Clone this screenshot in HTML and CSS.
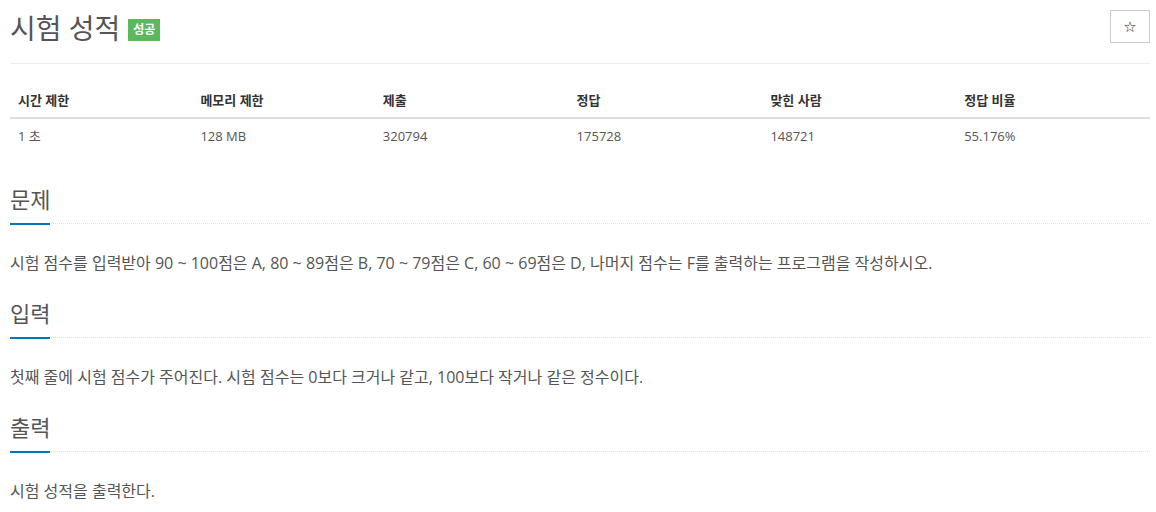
FILE: index.html
```html
<!DOCTYPE html>
<html lang="ko">
<head>
<meta charset="utf-8">
<title>시험 성적</title>
<link rel="stylesheet" href="styles.css">
</head>
<body>
<div class="container">
  <div class="page-header">
    <h1 class="title"><span class="title-text">시험 성적</span><span class="label-success">성공</span></h1>
    <button class="star-btn" type="button">☆</button>
  </div>

  <table class="info-table">
    <thead>
      <tr>
        <th class="c16">시간 제한</th>
        <th class="c16">메모리 제한</th>
        <th class="c17">제출</th>
        <th class="c17">정답</th>
        <th class="c17">맞힌 사람</th>
        <th class="c17">정답 비율</th>
      </tr>
    </thead>
    <tbody>
      <tr>
        <td>1 초</td>
        <td>128 MB</td>
        <td>320794</td>
        <td>175728</td>
        <td>148721</td>
        <td>55.176%</td>
      </tr>
    </tbody>
  </table>

  <section class="problem-section">
    <div class="headline"><h2>문제</h2></div>
    <p class="problem-text">시험 점수를 입력받아 90 ~ 100점은 A, 80 ~ 89점은 B, 70 ~ 79점은 C, 60 ~ 69점은 D, 나머지 점수는 F를 출력하는 프로그램을 작성하시오.</p>
  </section>

  <section class="problem-section">
    <div class="headline"><h2>입력</h2></div>
    <p class="problem-text">첫째 줄에 시험 점수가 주어진다. 시험 점수는 0보다 크거나 같고, 100보다 작거나 같은 정수이다.</p>
  </section>

  <section class="problem-section">
    <div class="headline"><h2>출력</h2></div>
    <p class="problem-text">시험 성적을 출력한다.</p>
  </section>
</div>
</body>
</html>
```

FILE: styles.css
```css
html, body {
  margin: 0;
  padding: 0;
  background: #fff;
}

body {
  font-family: "Open Sans", "Noto Sans CJK KR", sans-serif;
  color: #555;
  font-size: 13px;
}

.container {
  width: 1140px;
  padding-left: 10px;
}

.page-header {
  display: flex;
  justify-content: space-between;
  align-items: flex-start;
  padding-top: 10px;
  padding-bottom: 17px;
  border-bottom: 1px solid #eee;
}

.title {
  margin: 0;
  font-size: 28px;
  line-height: 36px;
  font-weight: 400;
  color: #555;
  display: flex;
  align-items: center;
}

.label-success {
  display: inline-block;
  margin-left: 8px;
  margin-top: 4px;
  background: #5cb85c;
  color: #fff;
  font-size: 12px;
  font-weight: 700;
  line-height: 22px;
  height: 22px;
  padding: 0 5px;
}

.star-btn {
  width: 40px;
  height: 33px;
  background: #fff;
  border: 1px solid #ccc;
  color: #222;
  font-size: 15px;
  font-family: "DejaVu Sans", sans-serif;
  padding: 0;
  cursor: pointer;
}

.info-table {
  width: 100%;
  border-collapse: collapse;
  margin-top: 19px;
}

.info-table th,
.info-table td {
  text-align: left;
  padding: 8px;
  line-height: 18px;
}

.info-table th {
  font-weight: 700;
  color: #333;
  border-bottom: 2px solid #ddd;
}

.info-table td {
  color: #555;
}

.c16 { width: 16%; }
.c17 { width: 17%; }

.problem-section {
  margin-top: 31px;
}

.problem-section + .problem-section {
  margin-top: 23px;
}

.headline {
  border-bottom: 1px dotted #dde3ea;
  margin-bottom: 27px;
}

.headline h2 {
  display: inline-block;
  margin: 0 0 -2px 0;
  padding-bottom: 9px;
  border-bottom: 2px solid #0076c0;
  font-size: 22px;
  line-height: 30px;
  font-weight: 400;
  color: #555;
}

.problem-text {
  margin: 0;
  font-size: 16px;
  line-height: 24px;
  color: #555;
}
```
